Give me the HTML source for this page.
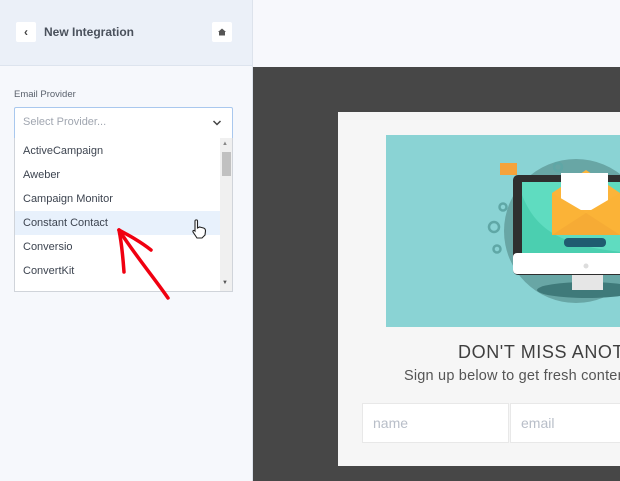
<!DOCTYPE html>
<html><head><style>
*{margin:0;padding:0;box-sizing:border-box}
body{width:620px;height:481px;overflow:hidden;position:relative;font-family:"Liberation Sans",sans-serif;background:#f7f8fc}
.abs{position:absolute}
.item{position:absolute;left:0;width:206px;height:24px;line-height:24px;padding-left:8px;font-size:11px;color:#3d4450}
</style></head><body>
<div class="abs" style="left:0;top:0;width:252px;height:66px;background:#ebf0f8;border-bottom:1px solid #dde4ee"></div>
<div class="abs" style="left:0;top:67px;width:252px;height:414px;background:#f6f8fc"></div>
<div class="abs" style="left:252px;top:0;width:1px;height:481px;background:#dde3ec"></div>
<div class="abs" style="left:253px;top:0;width:367px;height:67px;background:#f7f8fc"></div>
<div class="abs" style="left:16px;top:22px;width:20px;height:20px;background:#fff;border-radius:2px;font-size:12px;font-weight:bold;color:#444;text-align:center;line-height:20px">&#8249;</div>
<div class="abs" style="left:44px;top:25px;font-size:12px;font-weight:bold;color:#4a515c">New Integration</div>
<div class="abs" style="left:212px;top:22px;width:20px;height:20px;background:#fff;border-radius:2px"><svg width="20" height="20"><path d="M6 10 L10 6.5 L14 10 L13 10 L13 13.5 L7 13.5 L7 10Z" fill="#555"/></svg></div>
<div class="abs" style="left:14px;top:89px;font-size:9.5px;color:#5a616c">Email Provider</div>
<div class="abs" style="left:14px;top:107px;width:219px;height:32px;background:#fff;border:1px solid #a9c8ee;border-radius:2px 2px 0 0"></div>
<div class="abs" style="left:23px;top:116px;font-size:11px;color:#a0a6b0">Select Provider...</div>
<svg class="abs" style="left:212px;top:119px" width="10" height="8"><path d="M1.5 2 L5 5.5 L8.5 2" stroke="#444" stroke-width="1.5" fill="none"/></svg>
<div class="abs" style="left:14px;top:138px;width:219px;height:154px;background:#fff;border:1px solid #d0d4da;border-top:none">
<div class="item" style="top:1px">ActiveCampaign</div>
<div class="item" style="top:25px">Aweber</div>
<div class="item" style="top:49px">Campaign Monitor</div>
<div class="item" style="top:73px;background:#e8f1fc">Constant Contact</div>
<div class="item" style="top:97px">Conversio</div>
<div class="item" style="top:121px">ConvertKit</div>
<div class="abs" style="left:205px;top:0;width:12px;height:153px;background:#f0f0f0"></div>
<div class="abs" style="left:207px;top:14px;width:9px;height:24px;background:#c1c1c1"></div>
<div class="abs" style="left:207px;top:3px;font-size:6px;color:#888">&#9650;</div>
<div class="abs" style="left:207px;top:142px;font-size:6px;color:#555">&#9660;</div>
</div>
<svg class="abs" style="left:190px;top:218px" width="18" height="22"><path d="M5 3 C5 1.5 7.5 1.5 7.5 3 L7.5 10 L9.5 9 L11.5 9.5 L13.5 10 C15 10.5 15.5 11.5 15.5 13 L15 17 L12 20 L7 20 L3 14 C2.5 12.5 4 12 5 13 Z" fill="#fff" stroke="#222" stroke-width="1.1"/></svg>
<svg class="abs" style="left:0;top:0" width="252" height="320"><g stroke="#f00010" stroke-width="3.5" fill="none" stroke-linecap="round"><path d="M119 230 C135 255 152 275 168 298"/><path d="M119 230 C122 245 123 258 124 272"/><path d="M119 230 C130 236 141 242 151 250"/></g></svg>
<div class="abs" style="left:253px;top:67px;width:367px;height:414px;background:#474747"></div>
<div class="abs" style="left:338px;top:112px;width:282px;height:354px;background:#f6f6f6"></div>
<div class="abs" style="left:386px;top:135px;width:234px;height:192px;background:#8ad3d4;overflow:hidden">
<svg width="234" height="192"><circle cx="190" cy="96" r="72" fill="#68a6a5"/><rect x="114" y="28" width="17" height="12" fill="#f5a33b"/><circle cx="172" cy="32" r="4" fill="none" stroke="#5fa7a6" stroke-width="2.5"/><circle cx="117" cy="72" r="3.5" fill="none" stroke="#5fa7a6" stroke-width="2.5"/><circle cx="108" cy="92" r="5" fill="none" stroke="#5fa7a6" stroke-width="2.5"/><circle cx="111" cy="114" r="3.5" fill="none" stroke="#5fa7a6" stroke-width="2.5"/><ellipse cx="201" cy="155" rx="50" ry="8" fill="#3f7a7a"/><rect x="186" y="138" width="31" height="17" fill="#e6e6e6"/><rect x="127" y="40" width="120" height="100" rx="5" fill="#2f2f2f"/><rect x="136" y="47" width="110" height="71" fill="#5fdcc0"/><path d="M136 118 L136 60 C150 95 175 112 246 118Z" fill="#4bcfb0"/><rect x="127" y="118" width="120" height="21" rx="4" fill="#fff"/><circle cx="200" cy="131" r="2.5" fill="#ddd"/><path d="M166 58 L200 35 L234 58 L234 100 L166 100Z" fill="#fcb43a"/><rect x="175" y="38" width="47" height="37" fill="#fff"/><path d="M166 58 L200 78 L234 58 L234 100 L166 100Z" fill="#fbb337"/><path d="M166 100 L200 78 L234 100Z" fill="#f6ab35"/><rect x="178" y="103" width="42" height="9" rx="4" fill="#1f5c70"/></svg>
</div>
<div class="abs" style="left:458px;top:342px;font-size:18px;color:#3f3f3f;white-space:nowrap;letter-spacing:0.6px">DON'T MISS ANOTHER</div>
<div class="abs" style="left:404px;top:368px;font-size:14.5px;color:#555;white-space:nowrap;letter-spacing:0.2px">Sign up below to get fresh content</div>
<div class="abs" style="left:362px;top:403px;width:147px;height:40px;background:#fff;border:1px solid #e8e8e8;font-size:14px;color:#b8bec8;padding:11px 10px">name</div>
<div class="abs" style="left:510px;top:403px;width:120px;height:40px;background:#fff;border:1px solid #e8e8e8;font-size:14px;color:#b8bec8;padding:11px 10px">email</div>
</body></html>
